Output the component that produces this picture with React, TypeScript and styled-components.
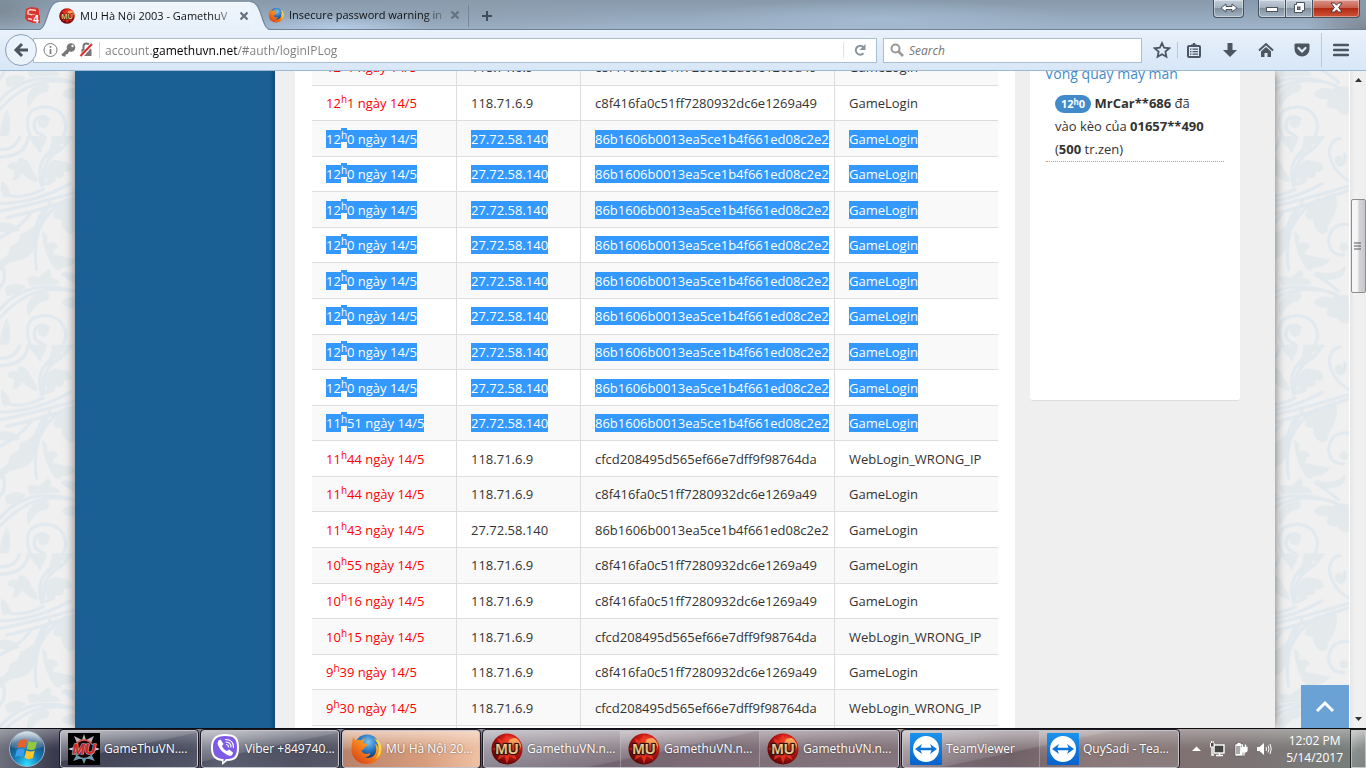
import React from "react";
import styled, { createGlobalStyle, css } from "styled-components";

const GlobalStyle = createGlobalStyle`
  *, *::before, *::after { box-sizing: border-box; }
  body { margin: 0; overflow: hidden; }
  button, input { font: inherit; margin: 0; }
  svg { display: block; }
`;

const uiFont = css`
  font-family: "Open Sans", "Noto Sans", sans-serif;
  font-size: 12px;
  line-height: 16px;
`;

const Screen = styled.div`
  ${uiFont}
  display: flex;
  flex-direction: column;
  height: 100vh;
  color: #222;
`;

/* ---------- Title bar and tabs ---------- */

const TitleBar = styled.header`
  display: flex;
  align-items: flex-start;
  height: 30px;
  padding-left: 25px;
  border-bottom: 1px solid #6f8295;
  background:
    radial-gradient(ellipse 60px 30px at 0 10px, #7d8a95, transparent),
    radial-gradient(ellipse 90px 14px at 340px 28px, #b3cbe4, transparent),
    radial-gradient(ellipse 170px 30px at 470px 10px, #8c9cac99, transparent),
    radial-gradient(ellipse 200px 20px at 880px 20px, #a9c0d8aa, transparent),
    radial-gradient(ellipse 60px 30px at 100% 30px, #7c858f, transparent),
    linear-gradient(#8799ab, #9fb4ca);
`;

const PinnedTab = styled.button`
  display: flex;
  align-items: center;
  width: 16px;
  height: 31px;
  padding: 0;
  border: 0;
  background: none;
`;

const TabShape = styled.div`
  display: flex;
  height: 30px;
  margin-left: -2px;
  position: relative;
  z-index: 1;
`;

const TabBody = styled.div<{ $active?: boolean }>`
  display: flex;
  align-items: center;
  height: 28px;
  ${(p) =>
    p.$active
      ? css`
          width: 191px;
          margin-top: 2px;
          padding-bottom: 2px;
          background: linear-gradient(#f0f6fd, #e6f0fa);
          border-top: 1px solid #f9fcff;
        `
      : css`
          width: 193px;
          margin-top: 1px;
          margin-left: -2px;
        `}
`;

const TabTitle = styled.span`
  flex: 1;
  margin: 0 6px 0 5px;
  overflow: hidden;
  white-space: nowrap;
  font-size: 11px;
  color: #111;
  mask-image: linear-gradient(90deg, #000 calc(100% - 18px), #0004);
`;

const CloseTab = styled.button`
  width: 12px;
  height: 12px;
  padding: 0;
  border: 0;
  background: none;
`;

const NewTab = styled.button`
  display: flex;
  align-items: center;
  width: 38px;
  height: 22px;
  margin-top: 5px;
  margin-left: 7px;
  padding: 0 0 0 12px;
  border: 0;
  border-left: 1px solid #74869a;
  background: none;
`;

const WindowButtons = styled.div`
  display: flex;
  margin-left: auto;
  padding-right: 6px;
`;

const WinButton = styled.button<{ $width: number; $close?: boolean; $gap?: number }>`
  display: flex;
  align-items: center;
  justify-content: center;
  width: ${(p) => p.$width}px;
  height: 18px;
  margin-right: ${(p) => p.$gap ?? 0}px;
  padding: 0 0 2px;
  border: 1px solid #45525f;
  border-top: 0;
  border-left-width: ${(p) => (p.$gap || p.$width === 28 ? 1 : 0)}px;
  border-radius: ${(p) => (p.$gap ? "0 0 4px 4px" : p.$close ? "0 0 4px 0" : p.$width === 28 ? "0 0 0 4px" : "0")};
  box-shadow: inset 0 0 0 1px #ffffff66;
  background: ${(p) =>
    p.$close
      ? "linear-gradient(#d9958a, #c9604e 45%, #b02a14 50%, #cf5438)"
      : "linear-gradient(#c3ced9, #a5b2bf 45%, #82909e 50%, #a4b4c3)"};
`;

/* ---------- Navigation bar ---------- */

const NavBar = styled.div`
  display: flex;
  align-items: center;
  height: 41px;
  border-bottom: 1px solid #9fb8d2;
  background: linear-gradient(#eaf2fb, #e0ecf9 40%, #d8e7f7);
`;

const BackButton = styled.button`
  display: flex;
  align-items: center;
  justify-content: center;
  width: 32px;
  height: 32px;
  margin-left: 5px;
  padding: 0;
  border: 1px solid #8ba0b8;
  border-radius: 50%;
  background: #eaf2fb;
  position: relative;
  z-index: 1;
`;

const Field = styled.div<{ $fixed?: boolean }>`
  display: flex;
  align-items: center;
  height: 25px;
  border: 1px solid #a9bdd3;
  background: #fff;
  ${(p) =>
    p.$fixed
      ? css`
          width: 259px;
          margin-left: 6px;
          padding-left: 6px;
          gap: 5px;
        `
      : css`
          flex: 1;
          margin-left: -4px;
          padding-left: 9px;
        `}
`;

const Identity = styled.div`
  display: flex;
  gap: 3px;
  height: 16px;
  padding-right: 5px;
  border-right: 1px solid #d4d9de;
`;

const UrlInput = styled.input`
  flex: 1;
  min-width: 0;
  height: 20px;
  padding: 0;
  margin-left: 5px;
  border: 0;
  outline: 0;
  color: transparent;
  background: linear-gradient(90deg, #7c7c7c 0 48px, #000 48px 133px, #7c7c7c 133px);
  background-clip: text;
`;

const SearchInput = styled.input`
  flex: 1;
  min-width: 0;
  height: 20px;
  padding: 0;
  border: 0;
  outline: 0;
  background: none;
  &::placeholder {
    color: #757575;
    opacity: 1;
    font-style: italic;
  }
`;

const ReloadButton = styled.button`
  width: 33px;
  height: 16px;
  padding: 0 0 0 9px;
  border: 0;
  border-left: 1px solid #dfe3e8;
  background: none;
`;

const ToolButton = styled.button`
  display: flex;
  align-items: center;
  justify-content: center;
  width: 36px;
  height: 18px;
  padding: 0;
  border: 0;
  background: none;
`;

const Tools = styled.div`
  display: flex;
  align-items: center;
  padding: 0 7px 0 2px;
`;

const Divider = styled.span<{ $tall?: boolean }>`
  width: 1px;
  height: ${(p) => (p.$tall ? 34 : 16)}px;
  margin-right: ${(p) => (p.$tall ? 1 : -2)}px;
  margin-left: ${(p) => (p.$tall ? 1 : -3)}px;
  background: #b9c9db;
`;

/* ---------- Web page ---------- */

const Viewport = styled.div`
  display: flex;
  flex: 1;
  min-height: 0;
  overflow: hidden;
`;

const Site = styled.div`
  position: relative;
  flex: 1;
  min-width: 0;
  overflow: hidden;
  background: #f0f0f1;
`;

const Backdrop = styled.svg`
  position: absolute;
  inset: 0;
  width: 100%;
  height: 100%;
`;

const Page = styled.div`
  position: relative;
  display: flex;
  height: 100%;
  margin: 0 74px 0 75px;
  background: #efefef;
  box-shadow: 0 0 10px #00000088;
`;

const Sidebar = styled.nav`
  width: 200px;
  background: linear-gradient(90deg, #1b6094 calc(100% - 6px), #114a78);
`;

const Main = styled.main`
  flex: 1;
  min-width: 0;
  margin-left: 20px;
  padding: 0 17px;
  overflow: hidden;
  background: #fff;
`;

const LogTable = styled.table`
  width: 100%;
  margin-top: -22px;
  border-collapse: separate;
  border-spacing: 0;
  table-layout: fixed;
  font-size: 13px;
  line-height: 19px;
  color: #333;
`;

const Col = styled.col<{ $width?: number }>`
  width: ${(p) => (p.$width ? `${p.$width}px` : "auto")};
`;

const Cell = styled.td<{ $time?: boolean }>`
  padding: 8px 0 8px 14px;
  border-top: 1px solid #ddd;
  white-space: nowrap;
  color: ${(p) => (p.$time ? "#f00" : "inherit")};
  & + & {
    border-left: 1px solid #ddd;
  }
`;

const Row = styled.tr`
  &:nth-child(odd) {
    background: #f9f9f9;
  }
  &:nth-child(7n + 2) td,
  &:nth-child(7n + 4) td,
  &:nth-child(7n + 6) td {
    padding-bottom: 7px;
  }
  &:nth-child(7n + 3) td,
  &:nth-child(7n + 5) td,
  &:nth-child(7n + 7) td {
    padding-top: 9px;
    padding-bottom: 7px;
  }
`;

const Mark = styled.span<{ $on?: boolean }>`
  ${(p) => p.$on && "background: #39f; color: #fff;"}
`;

const Sup = styled.sup`
  font-size: 10px;
  line-height: 0;
  vertical-align: 5px;
`;

const Aside = styled.aside`
  width: 260px;
  padding: 0 35px 0 15px;
`;

const News = styled.section`
  height: 330px;
  padding: 0 16px;
  border-bottom: 1px solid #ddd;
  border-radius: 0 0 3px 3px;
  background: #fff;
  overflow: hidden;
`;

const NewsTitle = styled.h3`
  margin: -8px 0 0 -1px;
  font-weight: 400;
  font-size: 14px;
  line-height: 22px;
  color: #428bca;
`;

const NewsItem = styled.p`
  margin: 7px 0 0;
  padding: 0 0 0 9px;
  border-bottom: 1px dotted #d8a04a;
  font-size: 13px;
  line-height: 23px;
  white-space: nowrap;
  color: #333;
`;

const Badge = styled.span`
  padding: 1px 6px 2px;
  border-radius: 9px;
  background: #428bca;
  color: #fff;
  font-weight: 700;
  font-size: 11px;
  line-height: 14px;
`;

const BadgeSup = styled.sup`
  font-size: 8px;
  line-height: 0;
  vertical-align: 3px;
`;

const ToTop = styled.button`
  position: absolute;
  right: 0;
  bottom: 0;
  display: flex;
  align-items: center;
  justify-content: center;
  width: 48px;
  height: 43px;
  padding: 0;
  border: 0;
  background: #6ba2d6;
`;

const ScrollBar = styled.div`
  display: flex;
  flex-direction: column;
  align-items: center;
  width: 17px;
  padding: 6px 0;
  border-left: 1px solid #fff;
  background: linear-gradient(90deg, #e6e6e6, #f1f1f1 30%, #eee);
`;

const Thumb = styled.div`
  display: flex;
  align-items: center;
  justify-content: center;
  width: 15px;
  height: 94px;
  margin: 116px 0 auto;
  border: 1px solid #8d8d8d;
  border-radius: 2px;
  background: linear-gradient(90deg, #f6f6f6 40%, #d4d4d8 55%, #c6c6cb);
`;

/* ---------- Task bar ---------- */

const TaskBar = styled.footer`
  display: flex;
  align-items: center;
  height: 40px;
  border-top: 1px solid #0d0d12;
  background:
    linear-gradient(#ffffff55, #ffffff10 40%, transparent 55%),
    linear-gradient(90deg, #6d707c, #3a3a4e 4%, #43475a 14%, #55586a 16%, #46485a 22%, #5b5362 36%, #76646e 50%, #7b6a72 65%, #6b5c63 74%, #857172 80%, #7d7273 90%, #77807c);
  color: #fff;
`;

const Start = styled.button`
  width: 36px;
  height: 38px;
  margin: 0 15px 0 9px;
  padding: 0;
  border: 0;
  background: none;
`;

const TaskGroup = styled.div<{ $hot?: boolean }>`
  display: flex;
  height: 38px;
  margin-right: 3px;
  border: 1px solid #c3c3cb;
  border-radius: 3px;
  outline: 1px solid #1e1a26;
  background: ${(p) =>
    p.$hot
      ? "linear-gradient(#f6dfd0cc, #e8bfa455 45%, transparent 55%), linear-gradient(90deg, #b8826a, #d79d7d 60%, #efc1a4)"
      : "linear-gradient(168deg, #ffffff88, #ffffff2a 46%, #ffffff08 48%, #ffffff14)"};
`;

const Task = styled.button`
  display: flex;
  align-items: center;
  width: 136px;
  padding: 0 0 0 7px;
  gap: 4px;
  border: 0;
  background: none;
  color: #fff;
  text-shadow: 0 0 2px #0008;
  white-space: nowrap;
  & + & {
    width: 139px;
    border-left: 1px solid #ffffff44;
    background: linear-gradient(168deg, #ffffff44, transparent 46%);
  }
`;

const Tray = styled.div`
  display: flex;
  align-items: center;
  gap: 8px;
  flex: 1;
  justify-content: flex-end;
  height: 100%;
`;

const TrayButton = styled.button`
  padding: 0;
  border: 0;
  background: none;
`;

const Clock = styled.time`
  margin: 0 0 0 6px;
  text-align: center;
  white-space: nowrap;
  line-height: 17px;
`;

const ShowDesktop = styled.button`
  width: 15px;
  height: 38px;
  padding: 0;
  border: 1px solid #d5d5d5aa;
  outline: 1px solid #222;
  background: linear-gradient(135deg, #ffffff77, #ffffff22 50%, #ffffff08);
`;

/* ---------- Icons ---------- */

const FirefoxIcon = ({ size, id }: { size: number; id: string }) => (
  <svg width={size} height={size} viewBox="0 0 32 32">
    <defs>
      <radialGradient id={`${id}g`} cx=".55" cy=".3" r=".7">
        <stop offset="0" stopColor="#7fc4ee" />
        <stop offset=".5" stopColor="#2a78c4" />
        <stop offset="1" stopColor="#0d2a66" />
      </radialGradient>
      <linearGradient id={`${id}f`} x1=".9" y1="0" x2=".1" y2="1">
        <stop offset="0" stopColor="#ffe04a" />
        <stop offset=".45" stopColor="#f58a1f" />
        <stop offset="1" stopColor="#d63a17" />
      </linearGradient>
    </defs>
    <circle cx="17" cy="14" r="12.5" fill={`url(#${id}g)`} />
    <path
      fill={`url(#${id}f)`}
      d="M3 4c1 2 2 3 3 3.500c2-1 4-1 5 0c1-1 3-2 4-2c-1 1-2 3-2 4c1 1.500 4 1 4.500 2c0 1.500-2 2-3 3c0 2-2 2-3 3c1 3 4 4 7 3c1-.5 2 0 1.500 1c-1 2-3 2.500-5 3c5 1.500 10-1 11-6c.5-3 0-6-1-8c2 1 3 3 3.500 5c0-4-2-8-5-10.500c4 1.500 8 6.500 8 12c0 8-6.500 14-15 14c-9 0-15-6.500-15-14.500c0-5 1-8 1.500-13.500z"
    />
    <path fill="#ffd84a" d="M26.500 8c4 5 3.500 13-1 17.500c5-2.500 6.500-8 5.500-12.500c-.5-3-2-5-4.500-7z" />
  </svg>
);

const MuBadge = ({ size, id }: { size: number; id: string }) => (
  <svg width={size} height={size} viewBox="0 0 32 32">
    <defs>
      <radialGradient id={id} cx=".6" cy=".35" r=".7">
        <stop offset="0" stopColor="#ff8a50" />
        <stop offset=".45" stopColor="#d31b16" />
        <stop offset="1" stopColor="#4d0505" />
      </radialGradient>
      <linearGradient id={`${id}t`} x2="0" y2="1">
        <stop offset="0" stopColor="#fff3d8" />
        <stop offset=".5" stopColor="#d9b06c" />
        <stop offset="1" stopColor="#f7dfae" />
      </linearGradient>
    </defs>
    <circle cx="16" cy="16" r="15.500" fill={`url(#${id})`} />
    <path d="M16 1l2.500 8 7-4-3 8 8.500 3-8.500 3 3 8-7-4-2.500 8-2.500-8-7 4 3-8-8.500-3 8.500-3-3-8 7 4z" fill="#ef3a22" opacity=".8" />
    <path d="M17 11q1-7 8-6 6 4 5 11-1-6-7-6-2 4-6 1z" fill="#ffa15a" />
    <text x="16" y="21" textAnchor="middle" fontFamily="Liberation Sans, sans-serif" fontWeight="700" fontSize="15" fill={`url(#${id}t)`} stroke="#3a120c" strokeWidth="2" paintOrder="stroke">
      MU
    </text>
  </svg>
);

const MuSquare = () => (
  <svg width="32" height="32" viewBox="0 0 32 32">
    <rect width="32" height="32" fill="#000" />
    <path d="M16 1l2 6 8-4-3 7 3 2H6l3-2-3-7 8 4z" fill="#b9b5bb" />
    <path d="M0 16l6-2v4zM32 16l-6-2v4z" fill="#e8e4e6" />
    <path d="M6 20h20l-2 3 3 5-6-2-3 0-2 5-2-5-3 0-6 2 3-5z" fill="#6f9ab0" />
    <circle cx="16" cy="16" r="9" fill="#1c0507" />
    <path d="M8 11q8-8 16 0" fill="none" stroke="#d9544c" strokeWidth="1.500" />
    <text x="16" y="21" textAnchor="middle" fontFamily="Liberation Sans, sans-serif" fontStyle="italic" fontWeight="700" fontSize="15" fill="#d8242c" stroke="#f6dcdc" strokeWidth="1.200" paintOrder="stroke">
      MU
    </text>
  </svg>
);

const PinnedIcon = () => (
  <svg width="16" height="17" viewBox="0 0 16 17">
    <path d="M1 2l5-2 7 1 1 2v9l-5 4-7-2-2-3z" fill="#d6362f" />
    <path d="M11 3.500L5 2.500 3 4v3l8 1.500v3L9 13l-6-1.500" fill="none" stroke="#f5d3cf" strokeWidth="1.500" />
    <rect x="7" y="8" width="8" height="8" fill="#e23a30" />
    <text x="11" y="16" textAnchor="middle" fontFamily="Liberation Sans, sans-serif" fontWeight="700" fontSize="10" fill="#fff">
      4
    </text>
  </svg>
);

const TabEdge = ({ right }: { right?: boolean }) => (
  <svg width="20" height="30" viewBox="0 0 20 30">
    <g transform={right ? "translate(20 0) scale(-1 1)" : undefined}>
      <path d="M0 30C10 29 8 2 20 2V30z" fill="#eaf2fb" />
      <path d="M0 29.500C9 28 7 2 20 1.500" fill="none" stroke="#6f8295" />
    </g>
  </svg>
);

const CrossIcon = () => (
  <svg width="12" height="12" viewBox="0 0 12 12">
    <path d="M2.500 2.500l7 7m0-7l-7 7" stroke="#66727e" strokeWidth="2.200" />
  </svg>
);

const ViberIcon = () => (
  <svg width="32" height="32" viewBox="0 0 32 32">
    <path d="M16 1C26 1 30 4 30 14.500S26 28 18 28l-5 4v-4C5 27 2 23 2 14.500S6 1 16 1z" fill="#fff" />
    <path d="M16 3c9 0 12 2.500 12 11.500S25 26 17 26l-2.500 3v-3C6.500 25.500 4 22 4 14.500S7 3 16 3z" fill="#7d5be6" />
    <path d="M9.500 7.500l2-1 3 4.500-1.500 2c1 2.500 2.500 4 5 5l2-1.500 4 3-.5 2c-1 1.500-2.500 1.500-4 1C14 20 10 16 8.500 10.500z" fill="#fff" />
    <path d="M16.500 6.500c5 0 8 3 8 8M17 9c3 .2 5 2 5 5M17.500 11.500c1.300.2 2 1 2 2.300" fill="none" stroke="#fff" strokeWidth="1.200" strokeLinecap="round" />
  </svg>
);

const TeamViewerIcon = ({ id }: { id: string }) => (
  <svg width="32" height="32" viewBox="0 0 32 32">
    <defs>
      <linearGradient id={id} x2="0" y2="1">
        <stop offset="0" stopColor="#1b93ec" />
        <stop offset="1" stopColor="#0763cc" />
      </linearGradient>
    </defs>
    <rect width="32" height="32" rx="1" fill={`url(#${id})`} />
    <circle cx="16" cy="16" r="13" fill="#fff" />
    <path d="M5 16l7-5-1.500 3.800h11L20 11l7 5-7 5 1.500-3.800h-11L12 21z" fill="#0a74d8" />
  </svg>
);

const StartOrb = () => (
  <svg width="36" height="38" viewBox="0 0 36 38">
    <defs>
      <radialGradient id="orb" cx=".5" cy=".95" r=".9">
        <stop offset="0" stopColor="#33e0ff" />
        <stop offset=".4" stopColor="#1480be" />
        <stop offset=".8" stopColor="#1b4a76" />
        <stop offset="1" stopColor="#6f94ae" />
      </radialGradient>
      <linearGradient id="gloss" x2="0" y2="1">
        <stop offset="0" stopColor="#fff" stopOpacity=".7" />
        <stop offset="1" stopColor="#fff" stopOpacity=".08" />
      </linearGradient>
    </defs>
    <circle cx="18" cy="19" r="17.500" fill="url(#orb)" stroke="#9fb6c6" />
    <path d="M2 17a16 15.500 0 0 1 32 0q-16 5-32 0z" fill="url(#gloss)" />
    <path d="M10 11q4-3 8-.8L16.200 18q-4-2-8 .2z" fill="#e8602c" />
    <path d="M19.500 11q4 2.500 8.500.2L26.200 19q-4 2.200-8.400-.2z" fill="#95c93d" />
    <path d="M7.800 19.800q4-2.400 8-.2L14 27q-4-2-8 .3z" fill="#3a9fe8" />
    <path d="M17.400 20.300q4 2.400 8.400.2L24 28q-4 2.400-8.500-.2z" fill="#fbc52c" />
  </svg>
);

const ink = "#4c5661";

/* ---------- Damask backdrop ---------- */

const Damask = () => (
  <Backdrop aria-hidden="true">
    <defs>
      <pattern id="damask" width="626" height="626" patternUnits="userSpaceOnUse" patternTransform="translate(0 65) scale(.3333)">
        <g transform="translate(0 -15)" fill="#e4e9eb">
          <path d="M20 110Q30 88 55 95Q48 82 65 80Q85 85 95 115Q114 135 112 155Q80 145 65 125Q60 148 35 150Q45 130 42 118z" />
          <path d="M130 165Q150 150 130 135Q128 115 145 100Q160 80 180 90Q215 90 215 115Q205 127 190 120Q200 148 165 140Q175 158 130 165z" />
          <path d="M135 82Q155 50 155 15L215 15Q205 40 180 38Q190 58 160 60Q160 80 135 82z" />
          <path d="M85 15H140Q135 50 120 55Q100 52 85 15z" />
          <path d="M5 150Q30 165 32 195L10 200Q-2 175 5 150z" />
          <path d="M250 185Q268 230 225 290Q235 302 210 310Q180 292 185 265Q148 268 165 240Q195 200 250 185z" />
          <path d="M125 300Q150 310 140 335Q170 328 175 350Q158 355 160 370Q200 380 235 385Q220 412 180 410Q190 422 165 415Q130 370 125 300z" />
          <path d="M115 270Q118 350 80 380Q60 390 40 392Q20 398 0 420V388Q30 375 30 345Q60 340 60 310Q90 300 115 270z" />
          <path d="M80 440Q100 432 115 440Q128 430 145 415Q162 430 150 440Q175 440 180 460Q120 460 90 465z" />
          <path d="M190 420Q250 440 280 402Q290 450 205 447z" />
          <path d="M185 515Q200 490 240 500Q260 485 291 495V575Q270 585 255 560Q210 560 230 530Q200 535 185 515z" />
          <path d="M130 480Q160 485 140 510Q110 510 85 558Q70 520 100 495z" />
          <path d="M15 470Q40 450 78 465Q60 490 20 495z" />
          <path d="M0 275Q40 270 62 298Q30 310 0 300z" />
          <path d="M20 560Q0 600 0 640H25Q40 600 20 560z" />
          <circle cx="262" cy="88" r="14" />
          <circle cx="276" cy="348" r="13" />
          <circle cx="130" cy="600" r="17" />
        </g>
        <g transform="translate(0 -15)" fill="none" stroke="#e2e9ee" strokeWidth="10" strokeLinecap="round">
          <path d="M0 55Q45 60 60 15M0 78Q80 75 85 15" />
          <path d="M125 165Q105 100 150 60M133 160Q118 110 160 70Q195 50 215 15M120 60Q110 30 95 15" />
          <path d="M0 218Q110 215 210 158M20 190Q60 208 130 175M0 240Q110 220 290 165M20 260Q140 235 290 178" />
          <path d="M110 415Q92 320 150 215M100 330Q105 270 135 230M120 290Q140 240 200 205M0 320Q60 290 90 250" />
          <path d="M290 280Q235 275 230 330Q235 375 276 372" />
          <path d="M291 150Q235 115 232 60Q240 22 265 22M262 102Q285 100 278 70" />
          <path d="M0 535Q80 440 220 480Q270 490 291 530M0 560Q90 460 200 478" />
          <path d="M90 640Q72 590 95 565Q140 540 180 570Q208 605 190 640M130 640Q90 625 108 590Q125 575 145 590" />
          <path d="M0 400Q20 420 10 455L0 470M190 430Q225 450 260 480M15 600Q25 640 5 641" />
        </g>
      </pattern>
    </defs>
    <rect width="100%" height="100%" fill="url(#damask)" />
  </Backdrop>
);

/* ---------- Data ---------- */

type Log = { h: string; rest: string; ip: string; hash: string; action: string; marked?: boolean };

const HASH_A = "c8f416fa0c51ff7280932dc6e1269a49";
const HASH_B = "86b1606b0013ea5ce1b4f661ed08c2e2";
const HASH_C = "cfcd208495d565ef66e7dff9f98764da";

const game = (h: string, m: string, ip = "118.71.6.9", hash = HASH_A, marked = false): Log => ({
  h,
  rest: `${m} ngày 14/5`,
  ip,
  hash,
  action: "GameLogin",
  marked,
});
const wrong = (h: string, m: string): Log => ({
  h,
  rest: `${m} ngày 14/5`,
  ip: "118.71.6.9",
  hash: HASH_C,
  action: "WebLogin_WRONG_IP",
});

const logs: Log[] = [
  game("12", "1"),
  game("12", "1"),
  ...Array.from({ length: 8 }, () => game("12", "0", "27.72.58.140", HASH_B, true)),
  game("11", "51", "27.72.58.140", HASH_B, true),
  wrong("11", "44"),
  game("11", "44"),
  game("11", "43", "27.72.58.140", HASH_B),
  game("10", "55"),
  game("10", "16"),
  wrong("10", "15"),
  game("9", "39"),
  wrong("9", "30"),
  game("9", "30"),
];

export default function App() {
  return (
    <Screen>
      <GlobalStyle />
      <TitleBar>
        <PinnedTab aria-label="Pinned tab">
          <PinnedIcon />
        </PinnedTab>
        <TabShape>
          <TabEdge />
          <TabBody $active>
            <MuBadge size={16} id="mu0" />
            <TabTitle>MU Hà Nội 2003 - GamethuV</TabTitle>
            <CloseTab aria-label="Close tab">
              <CrossIcon />
            </CloseTab>
          </TabBody>
          <TabEdge right />
        </TabShape>
        <TabBody>
          <FirefoxIcon size={16} id="ff0" />
          <TabTitle>Insecure password warning in</TabTitle>
          <CloseTab aria-label="Close tab">
            <CrossIcon />
          </CloseTab>
        </TabBody>
        <NewTab aria-label="New tab">
          <svg width="12" height="12" viewBox="0 0 12 12">
            <path d="M6 1v10M1 6h10" stroke="#414d59" strokeWidth="2" />
          </svg>
        </NewTab>
        <WindowButtons>
          <WinButton $width={31} $gap={14} aria-label="Resize">
            <svg width="18" height="10" viewBox="0 0 18 10">
              <path d="M1 5l5-4v2.500h6V1l5 4-5 4V6.500H6V9z" fill="#fff" stroke="#4a525a" />
            </svg>
          </WinButton>
          <WinButton $width={28} aria-label="Minimize">
            <svg width="14" height="8" viewBox="0 0 14 8">
              <rect x="1.500" y="3.500" width="11" height="4" fill="#fff" stroke="#4a525a" />
            </svg>
          </WinButton>
          <WinButton $width={27} aria-label="Restore">
            <svg width="13" height="13" viewBox="0 0 13 13">
              <path d="M3.500 1.500h8v8h-2v2h-8v-8h2z" fill="#fff" stroke="#4a525a" />
              <rect x="4.500" y="6" width="2.500" height="2.500" fill="#8593a0" stroke="#4a525a" />
            </svg>
          </WinButton>
          <WinButton $width={47} $close aria-label="Close">
            <svg width="13" height="11" viewBox="0 0 13 11">
              <path d="M1 1h3.500l2 2.200L8.500 1H12L8.700 5.500 12 10H8.500l-2-2.200L4.500 10H1l3.300-4.500z" fill="#fff" stroke="#57383a" />
            </svg>
          </WinButton>
        </WindowButtons>
      </TitleBar>

      <NavBar>
        <BackButton aria-label="Back">
          <svg width="16" height="16" viewBox="0 0 16 16">
            <path d="M9 2L3 8l6 6M3.500 8H15" fill="none" stroke={ink} strokeWidth="3" />
          </svg>
        </BackButton>
        <Field>
          <Identity>
            <svg width="15" height="16" viewBox="0 0 15 16">
              <circle cx="7.500" cy="8" r="6.500" fill="none" stroke="#7b7b7b" />
              <path d="M7.500 7v5M7.500 4v1.800" stroke="#7b7b7b" strokeWidth="1.700" />
            </svg>
            <svg width="15" height="16" viewBox="0 0 15 16">
              <path d="M1 13.500l6-6M1.500 13l2 .5.500-2 2-.5 1.500-3" stroke="#777" strokeWidth="2.200" fill="none" />
              <circle cx="10" cy="5.500" r="4.300" fill="#777" />
              <circle cx="11.500" cy="4" r="1.200" fill="#fff" />
            </svg>
            <svg width="15" height="16" viewBox="0 0 15 16">
              <path d="M4.500 7V4.500a3 3 0 0 1 6 0V7" fill="none" stroke="#777" strokeWidth="2" />
              <rect x="2.500" y="7" width="10" height="7" fill="#777" />
              <path d="M2 14.500L13 2" stroke="#fff" strokeWidth="4" />
              <path d="M1.500 14L13 2" stroke="#d92c2c" strokeWidth="2" />
            </svg>
          </Identity>
          <UrlInput aria-label="Address" defaultValue="account.gamethuvn.net/#auth/loginIPLog" />
          <ReloadButton aria-label="Reload">
            <svg width="14" height="14" viewBox="0 0 14 14">
              <path d="M10.500 10.300A4.500 4.500 0 1 1 10.500 4" fill="none" stroke="#8b95a0" strokeWidth="2" />
              <path d="M12.500 1v6h-6z" fill="#8b95a0" />
            </svg>
          </ReloadButton>
        </Field>
        <Field $fixed>
          <svg width="14" height="14" viewBox="0 0 14 14">
            <circle cx="5.500" cy="5.500" r="4" fill="none" stroke="#999" strokeWidth="2" />
            <path d="M8.500 8.500l4.500 4.500" stroke="#999" strokeWidth="2.600" />
          </svg>
          <SearchInput aria-label="Search" placeholder="Search" />
        </Field>
        <Tools>
          <ToolButton aria-label="Bookmark">
            <svg width="18" height="18" viewBox="0 0 18 18">
              <path d="M9 2l2.100 4.700 5.100.6-3.800 3.400 1 5L9 13.200l-4.400 2.500 1-5L1.800 7.300l5.100-.6z" fill="none" stroke={ink} strokeWidth="1.800" />
            </svg>
          </ToolButton>
          <Divider />
          <ToolButton aria-label="Bookmarks list">
            <svg width="16" height="16" viewBox="0 0 16 16">
              <rect x="2" y="4" width="12" height="11" rx="1" fill="none" stroke={ink} strokeWidth="2" />
              <path d="M5 4V2.500h1.500l.5-1.500h2l.5 1.500H11V4z" fill={ink} />
              <path d="M4 7.200h1.500M6.500 7.200H12M4 9.700h1.500M6.500 9.700H12M4 12.200h1.500M6.500 12.200H12" stroke={ink} strokeWidth="1.300" />
            </svg>
          </ToolButton>
          <ToolButton aria-label="Downloads">
            <svg width="16" height="16" viewBox="0 0 16 16">
              <path d="M5.500 1h5v7H15l-7 7-7-7h4.500z" fill={ink} />
            </svg>
          </ToolButton>
          <ToolButton aria-label="Home">
            <svg width="16" height="16" viewBox="0 0 16 16">
              <path d="M1 8.500L8 2l7 6.500" fill="none" stroke={ink} strokeWidth="2" />
              <path d="M3 9.500L8 5l5 4.500V15H9.500v-4h-3v4H3z" fill={ink} />
            </svg>
          </ToolButton>
          <ToolButton aria-label="Pocket">
            <svg width="16" height="16" viewBox="0 0 16 16">
              <path d="M1.500 1.500h13l1 1V7a7.500 7.500 0 0 1-15 0V2.500z" fill={ink} />
              <path d="M4.500 6L8 9.500 11.500 6" fill="none" stroke="#e3edf8" strokeWidth="2.200" strokeLinecap="round" />
            </svg>
          </ToolButton>
          <Divider $tall />
          <ToolButton aria-label="Menu">
            <svg width="16" height="14" viewBox="0 0 16 14">
              <path d="M1 2h14M1 7h14M1 12h14" stroke={ink} strokeWidth="2.400" strokeLinecap="round" />
            </svg>
          </ToolButton>
        </Tools>
      </NavBar>

      <Viewport>
        <Site>
          <Damask />
          <Page>
            <Sidebar aria-label="Account" />
            <Main>
              <LogTable>
                <colgroup>
                  <Col $width={144} />
                  <Col $width={124} />
                  <Col $width={254} />
                  <Col />
                </colgroup>
                <tbody>
                  {logs.map((l, i) => (
                    <Row key={i}>
                      <Cell $time>
                        <Mark $on={l.marked}>{l.h}</Mark>
                        <Sup>
                          <Mark $on={l.marked}>h</Mark>
                        </Sup>
                        <Mark $on={l.marked}>{l.rest}</Mark>
                      </Cell>
                      <Cell>
                        <Mark $on={l.marked}>{l.ip}</Mark>
                      </Cell>
                      <Cell>
                        <Mark $on={l.marked}>{l.hash}</Mark>
                      </Cell>
                      <Cell>
                        <Mark $on={l.marked}>{l.action}</Mark>
                      </Cell>
                    </Row>
                  ))}
                </tbody>
              </LogTable>
            </Main>
            <Aside>
              <News>
                <NewsTitle>Vòng quay may mắn</NewsTitle>
                <NewsItem>
                  <Badge>
                    12<BadgeSup>h</BadgeSup>0
                  </Badge>{" "}
                  <b>MrCar**686</b> đã
                  <br />
                  vào kèo của <b>01657**490</b>
                  <br />(<b>500</b> tr.zen)
                </NewsItem>
              </News>
            </Aside>
          </Page>
          <ToTop aria-label="Back to top">
            <svg width="20" height="14" viewBox="0 0 20 14">
              <path d="M2 11l8-8 8 8" fill="none" stroke="#fff" strokeWidth="3" />
            </svg>
          </ToTop>
        </Site>
        <ScrollBar>
          <svg width="7" height="6" viewBox="0 0 7 6">
            <path d="M0 5l3.500-4L7 5z" fill="#333" />
          </svg>
          <Thumb>
            <svg width="8" height="9" viewBox="0 0 8 9">
              <path d="M0 1h7M0 4h7M0 7h7" stroke="#555" />
            </svg>
          </Thumb>
          <svg width="7" height="6" viewBox="0 0 7 6">
            <path d="M0 1l3.500 4L7 1z" fill="#333" />
          </svg>
        </ScrollBar>
      </Viewport>

      <TaskBar>
        <Start aria-label="Start">
          <StartOrb />
        </Start>
        <TaskGroup>
          <Task>
            <MuSquare />
            GameThuVN....
          </Task>
        </TaskGroup>
        <TaskGroup>
          <Task>
            <ViberIcon />
            Viber +849740...
          </Task>
        </TaskGroup>
        <TaskGroup $hot>
          <Task>
            <FirefoxIcon size={32} id="ff1" />
            MU Hà Nội 20...
          </Task>
        </TaskGroup>
        <TaskGroup>
          {["mu1", "mu2", "mu3"].map((id) => (
            <Task key={id}>
              <MuBadge size={32} id={id} />
              GamethuVN.n...
            </Task>
          ))}
        </TaskGroup>
        <TaskGroup>
          <Task>
            <TeamViewerIcon id="tv1" />
            TeamViewer
          </Task>
          <Task>
            <TeamViewerIcon id="tv2" />
            QuySadi - Tea...
          </Task>
        </TaskGroup>
        <Tray>
          <TrayButton aria-label="Show hidden icons">
            <svg width="9" height="6" viewBox="0 0 9 6">
              <path d="M0 5l4.500-4.500L9 5z" fill="#fff" />
            </svg>
          </TrayButton>
          <TrayButton aria-label="Network">
            <svg width="16" height="16" viewBox="0 0 16 16">
              <rect x="5" y="4" width="10" height="8" fill="#444" stroke="#fff" strokeWidth="1.400" />
              <path d="M7 14.500h7M10.500 12v2M3 6v8h2" stroke="#fff" strokeWidth="1.400" fill="none" />
              <path d="M1.500 2v4h3.500V2M2.500 0v2M4.200 0v2" stroke="#fff" fill="#444" />
            </svg>
          </TrayButton>
          <TrayButton aria-label="Power">
            <svg width="15" height="16" viewBox="0 0 15 16">
              <path d="M2 3h2V1.500h4V3h2v2H8v5h2v5H2z" fill="#fff" stroke="#555" strokeWidth=".6" />
              <path d="M4 5v8M6 5v8" stroke="#555" />
              <path d="M8 6.500h6v2.500q0 2-3 2t-3-2zM9.500 3.500v3M12.500 3.500v3M11 11v3.500" stroke="#fff" strokeWidth="1.300" fill="#fff" />
            </svg>
          </TrayButton>
          <TrayButton aria-label="Volume">
            <svg width="16" height="16" viewBox="0 0 16 16">
              <path d="M1 6h2.500L8 2v12l-4.500-4H1z" fill="#fff" />
              <path d="M10 6q1 2 0 4M12 4.500q2 3.500 0 7M14 3q2.500 5 0 10" stroke="#fff" fill="none" />
            </svg>
          </TrayButton>
          <Clock>
            12:02 PM
            <br />
            5/14/2017
          </Clock>
          <ShowDesktop aria-label="Show desktop" />
        </Tray>
      </TaskBar>
    </Screen>
  );
}
